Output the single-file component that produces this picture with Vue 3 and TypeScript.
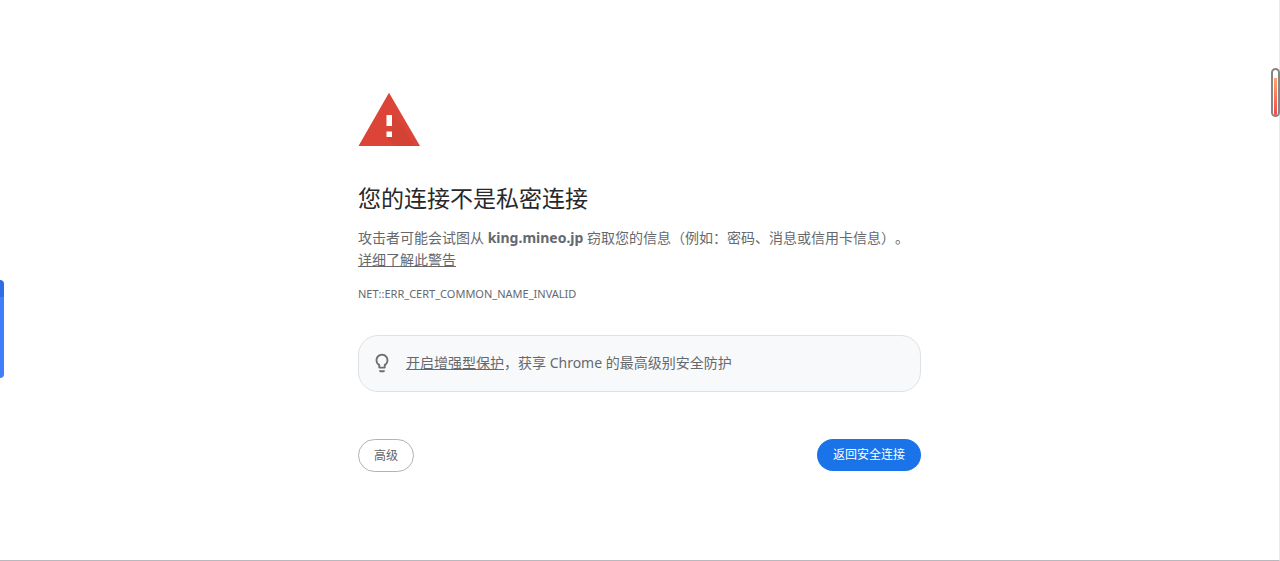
<script setup lang="ts">
const host: string = 'king.mineo.jp'
const errorCode: string = 'NET::ERR_CERT_COMMON_NAME_INVALID'
</script>

<template>
  <div class="page">
    <main class="interstitial">
      <svg class="warning" viewBox="0 0 62 54" aria-hidden="true">
        <path d="M31 0.8 62 54H0.5Z" fill="#db4437" />
        <path d="M34 23 43.500 32.500 56 54H37.500L28.500 45l5.500-6z" fill="#c93f33" opacity=".5" />
        <path d="M28.500 23H34v11h-5.500zM28.500 39.500H34V45h-5.500z" fill="#fff" />
      </svg>
      <h1>您的连接不是私密连接</h1>
      <p class="message">
        攻击者可能会试图从 <strong>{{ host }}</strong> 窃取您的信息（例如：密码、消息或信用卡信息）。<br />
        <a href="#">详细了解此警告</a>
      </p>
      <div class="code">{{ errorCode }}</div>
      <section class="promo">
        <svg class="bulb" viewBox="0 0 24 24" aria-hidden="true">
          <path
            fill="#6b6f73"
            d="M12 2C8.140 2 5 5.140 5 9c0 2.380 1.190 4.470 3 5.740V17c0 .55.45 1 1 1h6c.55 0 1-.45 1-1v-2.260c1.810-1.270 3-3.360 3-5.740 0-3.860-3.140-7-7-7zm2 11.700V16h-4v-2.300C8.480 12.630 7 11.530 7 9c0-2.760 2.240-5 5-5s5 2.240 5 5c0 2.490-1.510 3.650-3 4.700zM9 20h6v1c0 .55-.45 1-1 1h-4c-.55 0-1-.45-1-1z"
          />
        </svg>
        <p><a href="#">开启增强型保护</a>，获享 Chrome 的最高级别安全防护</p>
      </section>
      <div class="actions">
        <button type="button" class="secondary">高级</button>
        <button type="button" class="primary">返回安全连接</button>
      </div>
    </main>
    <div class="side-tab"></div>
    <div class="gauge"><div class="gauge-fill"></div></div>
  </div>
</template>

<style>
body {
  margin: 0;
  background: #fff;
}
</style>

<style scoped>
.page {
  position: relative;
  box-sizing: border-box;
  min-height: 100vh;
  padding: 92px 24px 24px;
  border-right: 1px solid #ebebeb;
  border-bottom: 1px solid #b9b9bd;
  color: #65696e;
  font-family: "Noto Sans", "Noto Sans CJK SC", sans-serif;
  font-size: 14px;
  line-height: 22px;
  text-spacing-trim: space-all;
}
.interstitial {
  max-width: 563px;
  margin: 0 auto;
}
.warning {
  display: block;
  width: 62px;
  height: 54px;
}
h1 {
  margin: 36px 0 12px;
  color: #27282b;
  font-size: 23px;
  font-weight: 400;
  line-height: 33px;
}
p {
  margin: 0;
}
a {
  color: inherit;
  text-decoration: underline;
}
.message {
  white-space: nowrap;
}
.code {
  margin-top: 12px;
  font-size: 11px;
}
.promo {
  display: flex;
  align-items: center;
  box-sizing: border-box;
  min-height: 57px;
  margin-top: 30px;
  padding: 0 12px 2px;
  gap: 13px;
  border: 1px solid #dfe1e5;
  border-radius: 20px;
  background: #f8f9fa;
}
.bulb {
  width: 22px;
  height: 22px;
}
.actions {
  display: flex;
  align-items: flex-start;
  justify-content: space-between;
  margin-top: 47px;
}
button {
  padding: 0 15px;
  border: 0;
  border-radius: 17px;
  font: inherit;
  font-size: 12px;
  cursor: pointer;
}
.secondary {
  height: 33px;
  border: 1px solid #b0b3b7;
  background: #fff;
  color: #5f6368;
}
.primary {
  height: 32px;
  padding: 0 16px;
  background: #1a73e8;
  color: #fff;
}
.side-tab {
  position: absolute;
  top: 280px;
  left: 0;
  width: 4px;
  height: 98px;
  border-radius: 0 4px 4px 0;
  background: linear-gradient(#2f6ce5 17px, #3f7dfb 17px);
}
.gauge {
  position: absolute;
  top: 68px;
  right: -1px;
  box-sizing: border-box;
  width: 9px;
  height: 49px;
  padding-top: 8px;
  border: 2px solid #858585;
  border-radius: 5px;
  background: #fff;
  overflow: hidden;
}
.gauge-fill {
  width: 3px;
  height: 100%;
  margin: 0 auto;
  background: linear-gradient(#ffa56b, #f24a4a);
}
</style>
